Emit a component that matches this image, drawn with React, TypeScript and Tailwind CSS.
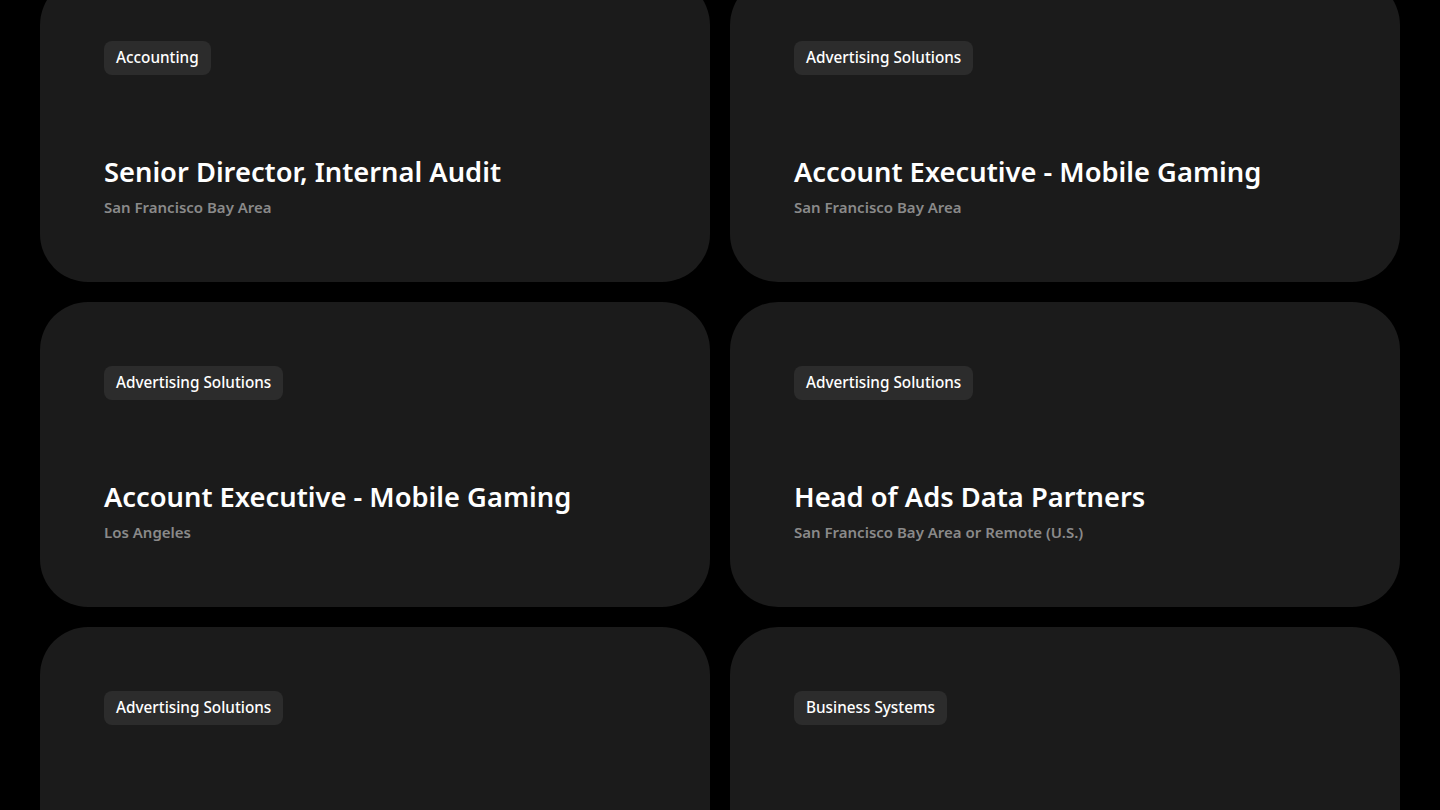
const jobs = [
  { tag: 'Accounting', title: 'Senior Director, Internal Audit', location: 'San Francisco Bay Area' },
  { tag: 'Advertising Solutions', title: 'Account Executive - Mobile Gaming', location: 'San Francisco Bay Area' },
  { tag: 'Advertising Solutions', title: 'Account Executive - Mobile Gaming', location: 'Los Angeles' },
  { tag: 'Advertising Solutions', title: 'Head of Ads Data Partners', location: 'San Francisco Bay Area or Remote (U.S.)' },
  { tag: 'Advertising Solutions' },
  { tag: 'Business Systems' },
];

const JobCard = ({ tag, title, location }: { tag: string; title?: string; location?: string }) => (
  <a className="flex h-[305px] flex-col justify-between rounded-[48px] bg-[#1b1b1b] px-16 pt-16 pb-[65px]">
    <div>
      <span className="inline-flex h-[34px] items-center rounded-lg bg-[#2c2c2c] px-3 pb-px text-[15.3px] font-medium text-white">
        {tag}
      </span>
    </div>
    {title && (
      <div className="flex flex-col gap-[7px]">
        <h3 className="text-[27.3px] font-semibold leading-9 text-white">{title}</h3>
        <p className="text-[15px] font-semibold leading-5 text-[#8a8a8a]">{location}</p>
      </div>
    )}
  </a>
);

export default function App() {
  return (
    <div className="h-[810px] overflow-hidden bg-black" style={{ fontFamily: '"Noto Sans", sans-serif' }}>
      {/* job list, scrolled a little */}
      <div className="-mt-[23px] grid grid-cols-2 gap-5 px-10">
        {jobs.map((job, i) => (
          <JobCard key={i} {...job} />
        ))}
      </div>
    </div>
  );
}
